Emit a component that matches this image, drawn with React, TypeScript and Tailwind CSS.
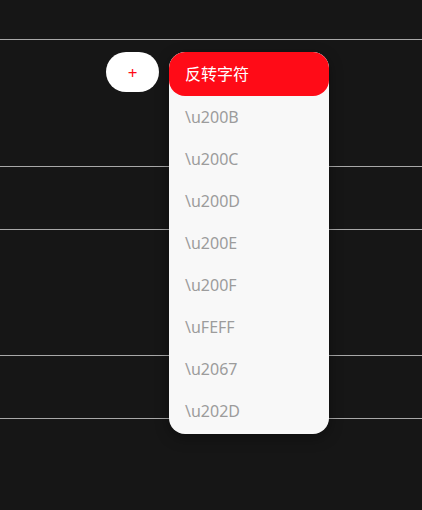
import React from "react";

const items = [
  "\\u200B",
  "\\u200C",
  "\\u200D",
  "\\u200E",
  "\\u200F",
  "\\uFEFF",
  "\\u2067",
  "\\u202D",
];

const App = () => {
  return (
    <div
      className="w-[422px] h-[510px] bg-[#161616] overflow-hidden"
      style={{ fontFamily: '"Noto Sans", "Noto Sans CJK SC", sans-serif' }}
    >
      <div className="h-[40px] border-b border-[#a8a8a8]" />
      <div className="h-[127px] border-b border-[#a8a8a8] pt-3 pl-[106px]">
        <div className="relative flex items-start">
          <button className="w-[53px] h-[40px] rounded-full bg-white text-[#ff0b17] text-[17px] leading-none flex items-center justify-center pt-px">
            +
          </button>
          {/* dropdown overlay */}
          <div className="absolute left-[63px] top-0 z-10 w-[160px] rounded-[16px] bg-[#f8f8f8] overflow-hidden shadow-[0_4px_14px_rgba(0,0,0,0.35)] pb-[2px]">
            <div className="h-[44px] bg-[#ff0b17] rounded-[16px] flex items-center px-4 text-white text-[16px]">
              反转字符
            </div>
            {items.map((it) => (
              <div
                key={it}
                className="h-[42px] flex items-center px-4 text-[16px] text-[#9c9c9c]"
              >
                {it}
              </div>
            ))}
          </div>
        </div>
      </div>
      <div className="h-[63px] border-b border-[#a8a8a8]" />
      <div className="h-[126px] border-b border-[#a8a8a8]" />
      <div className="h-[63px] border-b border-[#a8a8a8]" />
    </div>
  );
};

export default App;
